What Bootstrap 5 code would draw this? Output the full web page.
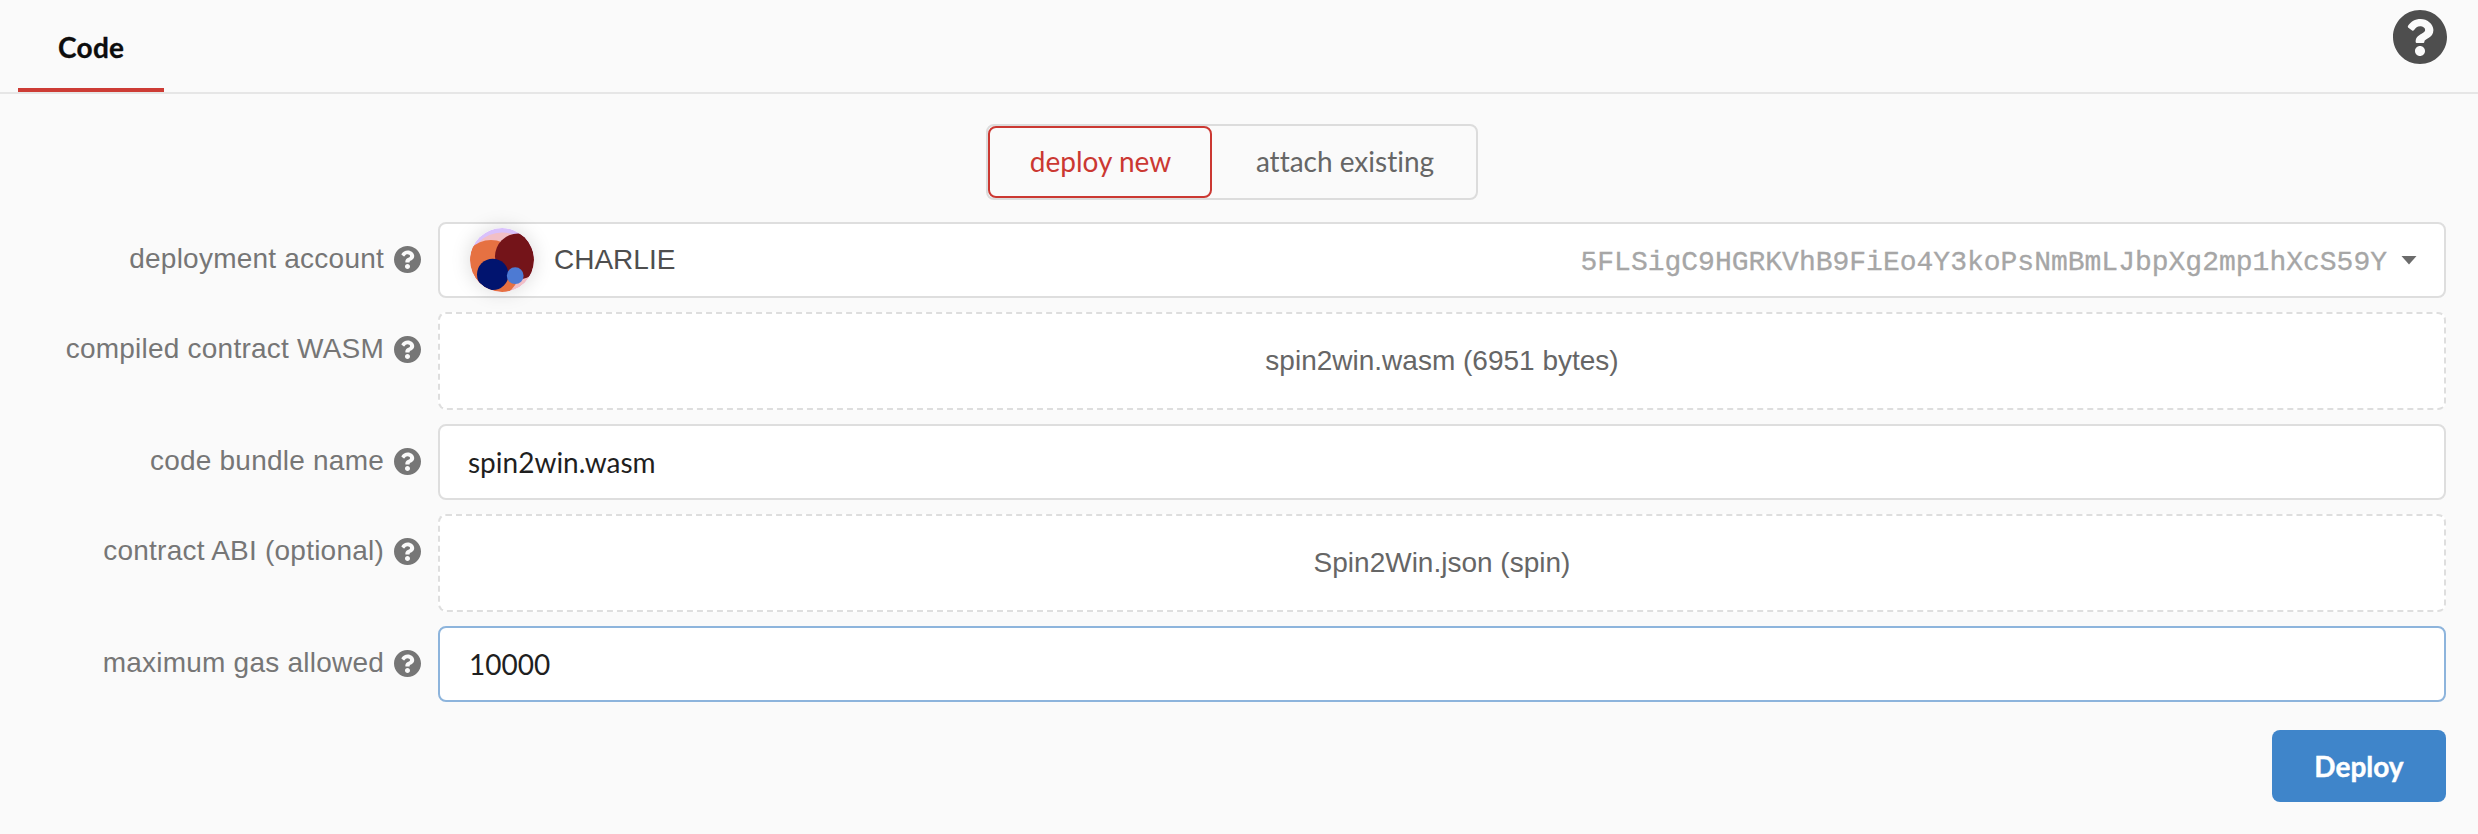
<!DOCTYPE html>
<html lang="en">
<head>
<meta charset="utf-8">
<title>Contracts</title>
<link href="https://cdn.jsdelivr.net/npm/bootstrap@5.3.0/dist/css/bootstrap.min.css" rel="stylesheet">
<style>
  body { background: #fafafa; font: 28px/32px Lato, sans-serif; color: #4e4e4e; }
  body, button { font-variant-ligatures: none; }
  .helv { font-family: "Liberation Sans", sans-serif; }
  .topbar { height: 94px; border-bottom: 2px solid #e6e6e6; padding: 0 31px 0 18px; }
  .tab-link { width: 146px; height: 92px; border-bottom: 4px solid #cd3c35; color: #0d0d0d; font-weight: 700; padding: 31px 0 0 40px; letter-spacing: .3px; -webkit-text-stroke: .3px #0d0d0d; }
  .help-big { width: 54px; height: 54px; margin-top: 10px; fill: #4e4e4e; }
  .switcher { width: 492px; height: 76px; margin: 30px 0 22px 986px; border: 2px solid #dcdcdc; border-radius: 8px; }
  .switcher button { background: none; border: 0; padding: 0 0 2px 2px; color: #666; }
  .switcher .chosen { width: 224px; border: 2px solid #cb3832; border-radius: 8px; color: #cb3832; padding-left: 1px; }
  .fields { gap: 14px; padding-right: 32px; }
  .caption { width: 384px; padding-top: 21px; color: #767676; letter-spacing: .23px; }
  .help { width: 27px; height: 27px; margin: 24px 17px 0 10px; fill: #767676; }
  .box { height: 76px; background: #fff; border: 2px solid #dedede; border-radius: 8px; padding: 0 28px; }
  .box-input { color: #1f1f1f; padding-bottom: 1px; }
  .box-focus { border-color: #8db4dc; padding-left: 29px; }
  .drop { height: 98px; border-style: dashed; color: #666; }
  .avatar { width: 64px; height: 64px; margin: 0 20px 0 2px; border-radius: 50%; box-shadow: 0 0 20px rgba(0,0,0,.15); }
  .addr { font-family: "Liberation Mono", monospace; color: #a6a6a6; margin-right: 14px; padding-top: 5px; -webkit-text-stroke: .3px #a6a6a6; }
  .caret { width: 16px; height: 9px; fill: #6b6b6b; }
  .account { padding-right: 27px; }
  .deploy { width: 174px; height: 72px; margin: 28px 32px 0 0; background: #3f85ca; border: 0; border-radius: 8px; color: #fff; font-size: 28px; font-weight: 700; line-height: 32px; padding: 0 0 1px; -webkit-text-stroke: .4px #fff; }
</style>
</head>
<body>
<svg class="d-none"><symbol id="q" viewBox="8 8 496 496"><path d="M504 256c0 136.997-111.043 248-248 248S8 392.997 8 256C8 119.083 119.043 8 256 8s248 111.083 248 248zM262.655 90c-54.497 0-89.255 22.957-116.549 63.758-3.536 5.286-2.353 12.415 2.715 16.258l34.699 26.31c5.205 3.947 12.621 3.008 16.665-2.122 17.864-22.658 30.113-35.797 57.303-35.797 20.429 0 45.698 13.148 45.698 32.958 0 14.976-12.363 22.667-32.534 33.976C247.128 238.528 216 254.941 216 296v4c0 6.627 5.373 12 12 12h56c6.627 0 12-5.373 12-12v-1.333c0-28.462 83.186-29.647 83.186-106.667 0-58.002-60.165-102-116.531-102zM256 338c-25.365 0-46 20.635-46 46 0 25.364 20.635 46 46 46s46-20.636 46-46c0-25.364-20.635-46-46-46z"/></symbol></svg>

<header class="topbar d-flex justify-content-between">
  <a class="tab-link text-decoration-none" href="#">Code</a>
  <svg class="help-big"><use href="#q"/></svg>
</header>

<main>
  <div class="switcher d-flex">
    <button class="chosen">deploy new</button>
    <button class="flex-fill">attach existing</button>
  </div>

  <div class="fields d-flex flex-column">
    <div class="d-flex">
      <div class="caption helv text-end text-nowrap">deployment account</div>
      <svg class="help flex-shrink-0"><use href="#q"/></svg>
      <div class="box account helv flex-fill d-flex align-items-center">
        <svg class="avatar" viewBox="0 0 64 64">
          <defs><clipPath id="disc"><circle cx="32" cy="32" r="32"/></clipPath></defs>
          <g clip-path="url(#disc)">
            <rect width="64" height="64" fill="#d9c1fb"/>
            <circle cx="32" cy="37.5" r="33" fill="#f2bfc6"/>
            <circle cx="21" cy="41" r="29" fill="#e67142"/>
            <circle cx="48" cy="28.5" r="23" fill="#741419"/>
            <circle cx="22.7" cy="46.4" r="15.7" fill="#01146f"/>
            <circle cx="45.2" cy="47.7" r="8.4" fill="#4d7ad3"/>
          </g>
        </svg>
        <span>CHARLIE</span>
        <span class="addr ms-auto">5FLSigC9HGRKVhB9FiEo4Y3koPsNmBmLJbpXg2mp1hXcS59Y</span>
        <svg class="caret" viewBox="0 0 16 9"><path d="M0.5 0h15L8 8.5z"/></svg>
      </div>
    </div>
    <div class="d-flex">
      <div class="caption helv text-end text-nowrap">compiled contract WASM</div>
      <svg class="help flex-shrink-0"><use href="#q"/></svg>
      <div class="box drop helv flex-fill d-flex align-items-center justify-content-center">spin2win.wasm (6951 bytes)</div>
    </div>
    <div class="d-flex">
      <div class="caption helv text-end text-nowrap">code bundle name</div>
      <svg class="help flex-shrink-0"><use href="#q"/></svg>
      <div class="box box-input flex-fill d-flex align-items-center">spin2win.wasm</div>
    </div>
    <div class="d-flex">
      <div class="caption helv text-end text-nowrap">contract ABI (optional)</div>
      <svg class="help flex-shrink-0"><use href="#q"/></svg>
      <div class="box drop helv flex-fill d-flex align-items-center justify-content-center">Spin2Win.json (spin)</div>
    </div>
    <div class="d-flex">
      <div class="caption helv text-end text-nowrap">maximum gas allowed</div>
      <svg class="help flex-shrink-0"><use href="#q"/></svg>
      <div class="box box-input box-focus flex-fill d-flex align-items-center">10000</div>
    </div>
  </div>

  <div class="d-flex justify-content-end">
    <button class="btn deploy">Deploy</button>
  </div>
</main>
<script src="https://cdn.jsdelivr.net/npm/bootstrap@5.3.0/dist/js/bootstrap.bundle.min.js"></script>
</body>
</html>
